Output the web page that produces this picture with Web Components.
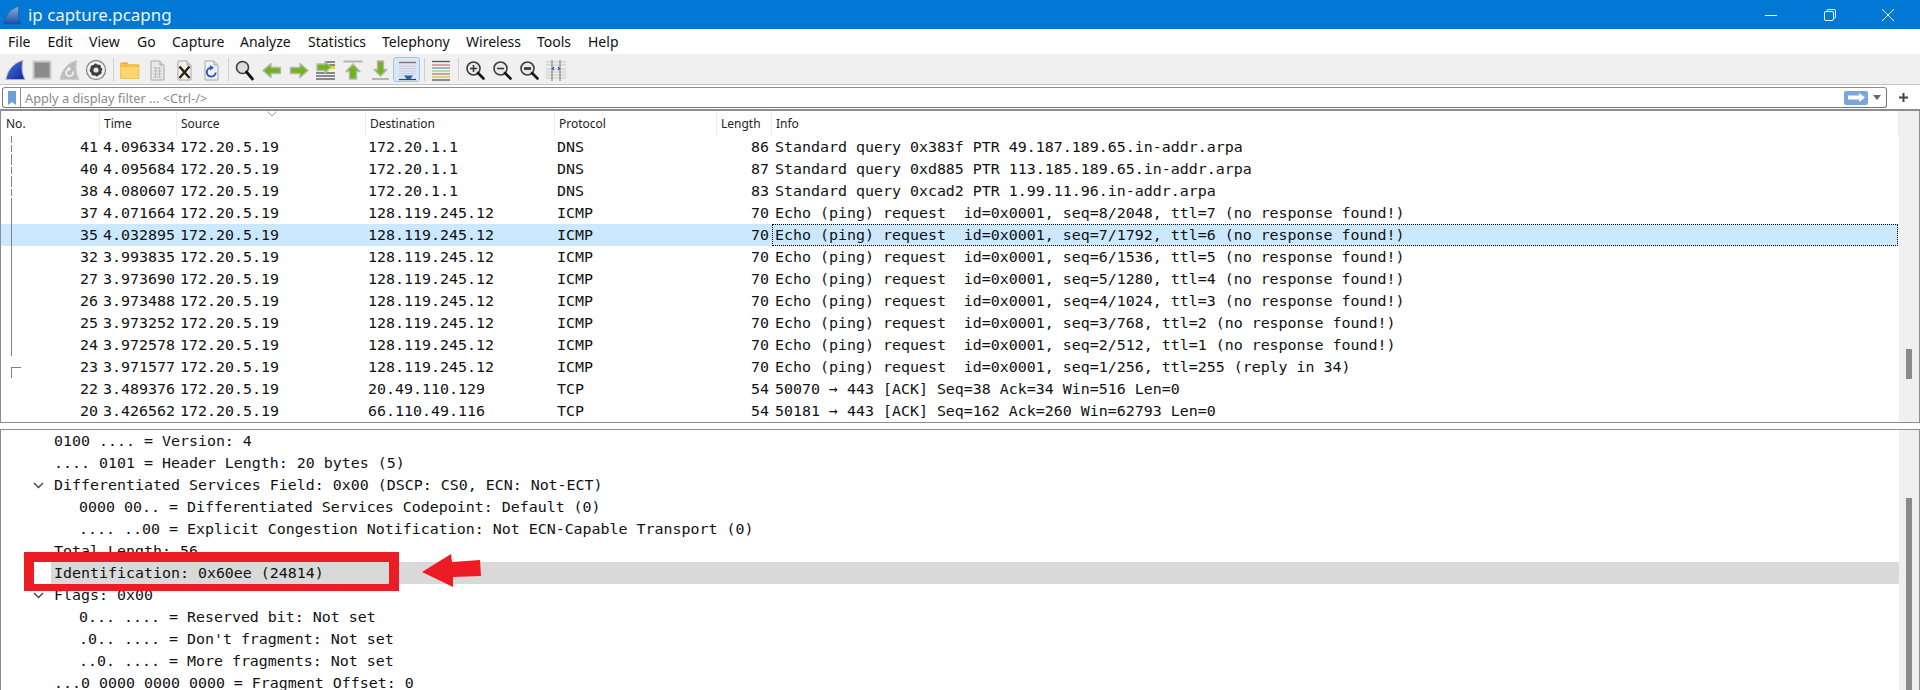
<!DOCTYPE html>
<html lang="en">
<head>
<meta charset="utf-8">
<title>ip capture.pcapng</title>
<style>
html,body{margin:0;padding:0;background:#fff;overflow:hidden;height:690px}
</style>
</head>
<body>
<ws-app>
  <ws-titlebar title-text="ip capture.pcapng"></ws-titlebar>
  <ws-menubar>
    <ws-menu-item w="39.5">File</ws-menu-item>
    <ws-menu-item w="41.5">Edit</ws-menu-item>
    <ws-menu-item w="48">View</ws-menu-item>
    <ws-menu-item w="35">Go</ws-menu-item>
    <ws-menu-item w="68">Capture</ws-menu-item>
    <ws-menu-item w="68">Analyze</ws-menu-item>
    <ws-menu-item w="74">Statistics</ws-menu-item>
    <ws-menu-item w="84">Telephony</ws-menu-item>
    <ws-menu-item w="71">Wireless</ws-menu-item>
    <ws-menu-item w="51">Tools</ws-menu-item>
    <ws-menu-item w="50">Help</ws-menu-item>
  </ws-menubar>
  <ws-toolbar>
    <ws-icon name="fin"></ws-icon><ws-icon name="stop"></ws-icon><ws-icon name="restart"></ws-icon><ws-icon name="gear"></ws-icon>
    <ws-sep></ws-sep>
    <ws-icon name="folder"></ws-icon><ws-icon name="doc"></ws-icon><ws-icon name="docx"></ws-icon><ws-icon name="docr"></ws-icon>
    <ws-sep></ws-sep>
    <ws-icon name="search"></ws-icon><ws-icon name="left"></ws-icon><ws-icon name="right"></ws-icon><ws-icon name="goto"></ws-icon><ws-icon name="first"></ws-icon><ws-icon name="last"></ws-icon><ws-icon name="auto" active></ws-icon>
    <ws-sep></ws-sep>
    <ws-icon name="color"></ws-icon>
    <ws-sep></ws-sep>
    <ws-icon name="zin"></ws-icon><ws-icon name="zout"></ws-icon><ws-icon name="znorm"></ws-icon><ws-icon name="resize"></ws-icon>
  </ws-toolbar>
  <ws-filterbar placeholder="Apply a display filter ... &lt;Ctrl-/&gt;"></ws-filterbar>
  <ws-packetlist>
    <ws-packet-row tree="dash" no="41" time="4.096334" src="172.20.5.19" dst="172.20.1.1" proto="DNS" len="86">Standard query 0x383f PTR 49.187.189.65.in-addr.arpa</ws-packet-row>
    <ws-packet-row tree="dash" no="40" time="4.095684" src="172.20.5.19" dst="172.20.1.1" proto="DNS" len="87">Standard query 0xd885 PTR 113.185.189.65.in-addr.arpa</ws-packet-row>
    <ws-packet-row tree="dash" no="38" time="4.080607" src="172.20.5.19" dst="172.20.1.1" proto="DNS" len="83">Standard query 0xcad2 PTR 1.99.11.96.in-addr.arpa</ws-packet-row>
    <ws-packet-row tree="line" no="37" time="4.071664" src="172.20.5.19" dst="128.119.245.12" proto="ICMP" len="70">Echo (ping) request  id=0x0001, seq=8/2048, ttl=7 (no response found!)</ws-packet-row>
    <ws-packet-row tree="line" selected no="35" time="4.032895" src="172.20.5.19" dst="128.119.245.12" proto="ICMP" len="70">Echo (ping) request  id=0x0001, seq=7/1792, ttl=6 (no response found!)</ws-packet-row>
    <ws-packet-row tree="line" no="32" time="3.993835" src="172.20.5.19" dst="128.119.245.12" proto="ICMP" len="70">Echo (ping) request  id=0x0001, seq=6/1536, ttl=5 (no response found!)</ws-packet-row>
    <ws-packet-row tree="line" no="27" time="3.973690" src="172.20.5.19" dst="128.119.245.12" proto="ICMP" len="70">Echo (ping) request  id=0x0001, seq=5/1280, ttl=4 (no response found!)</ws-packet-row>
    <ws-packet-row tree="line" no="26" time="3.973488" src="172.20.5.19" dst="128.119.245.12" proto="ICMP" len="70">Echo (ping) request  id=0x0001, seq=4/1024, ttl=3 (no response found!)</ws-packet-row>
    <ws-packet-row tree="line" no="25" time="3.973252" src="172.20.5.19" dst="128.119.245.12" proto="ICMP" len="70">Echo (ping) request  id=0x0001, seq=3/768, ttl=2 (no response found!)</ws-packet-row>
    <ws-packet-row tree="line" no="24" time="3.972578" src="172.20.5.19" dst="128.119.245.12" proto="ICMP" len="70">Echo (ping) request  id=0x0001, seq=2/512, ttl=1 (no response found!)</ws-packet-row>
    <ws-packet-row tree="corner" no="23" time="3.971577" src="172.20.5.19" dst="128.119.245.12" proto="ICMP" len="70">Echo (ping) request  id=0x0001, seq=1/256, ttl=255 (reply in 34)</ws-packet-row>
    <ws-packet-row no="22" time="3.489376" src="172.20.5.19" dst="20.49.110.129" proto="TCP" len="54">50070 → 443 [ACK] Seq=38 Ack=34 Win=516 Len=0</ws-packet-row>
    <ws-packet-row no="20" time="3.426562" src="172.20.5.19" dst="66.110.49.116" proto="TCP" len="54">50181 → 443 [ACK] Seq=162 Ack=260 Win=62793 Len=0</ws-packet-row>
  </ws-packetlist>
  <ws-details>
    <ws-detail-row>0100 .... = Version: 4</ws-detail-row>
    <ws-detail-row>.... 0101 = Header Length: 20 bytes (5)</ws-detail-row>
    <ws-detail-row open>Differentiated Services Field: 0x00 (DSCP: CS0, ECN: Not-ECT)</ws-detail-row>
    <ws-detail-row level="1">0000 00.. = Differentiated Services Codepoint: Default (0)</ws-detail-row>
    <ws-detail-row level="1">.... ..00 = Explicit Congestion Notification: Not ECN-Capable Transport (0)</ws-detail-row>
    <ws-detail-row>Total Length: 56</ws-detail-row>
    <ws-detail-row selected>Identification: 0x60ee (24814)</ws-detail-row>
    <ws-detail-row open>Flags: 0x00</ws-detail-row>
    <ws-detail-row level="1">0... .... = Reserved bit: Not set</ws-detail-row>
    <ws-detail-row level="1">.0.. .... = Don't fragment: Not set</ws-detail-row>
    <ws-detail-row level="1">..0. .... = More fragments: Not set</ws-detail-row>
    <ws-detail-row>...0 0000 0000 0000 = Fragment Offset: 0</ws-detail-row>
  </ws-details>
  <ws-annotation></ws-annotation>
</ws-app>
<script>
const UI='"Noto Sans","Open Sans","Liberation Sans",sans-serif';
const MONO='"DejaVu Sans Mono","Liberation Mono",monospace';
function def(name,build){
  customElements.define(name,class extends HTMLElement{
    connectedCallback(){
      if(this.shadowRoot)return;
      const s=this.attachShadow({mode:'open'});
      s.innerHTML=build(this);
    }
  });
}
const a=(el,n,d='')=>{const v=el.getAttribute(n);return v===null?d:v};
const FIN='M2 20.5C3.5 11 10 3.5 19 1.5 17.2 8 18 15 21 20.5Z';

def('ws-app',()=>`<style>:host{display:flex;flex-direction:column;width:1920px;height:690px;overflow:hidden;position:relative;background:#fff}</style><slot></slot>`);

def('ws-titlebar',el=>`<style>
:host{display:flex;align-items:center;height:29px;flex:none;background:#0078d4;color:#fff;font:16px/29px ${UI}}
.logo{margin:0 6px 0 2px;display:block}
.t{flex:1;font-size:16.9px;color:#eef6fd}
.b{width:58.5px;display:flex;justify-content:center;align-items:center}
.b svg{display:block}
.c{width:58px;padding-right:3px}
</style>
<svg class="logo" width="20" height="20" viewBox="0 0 22 22"><defs><linearGradient id="g" x1="0" y1="0" x2="0" y2="1"><stop offset="0" stop-color="#8fb0d8"/><stop offset="1" stop-color="#1c4fa8"/></linearGradient></defs><path d="${FIN}" fill="url(#g)" stroke="#0a5aa8" stroke-width=".6"/></svg>
<span class="t">${a(el,'title-text')}</span>
<span class="b"><svg width="14" height="14" viewBox="0 0 14 14"><path d="M1 7.5H13" stroke="#fff" stroke-width="1"/></svg></span>
<span class="b"><svg width="14" height="14" viewBox="0 0 14 14" fill="none" stroke="#fff"><rect x="1.5" y="3.5" width="9" height="9" rx="1.5"/><path d="M4 3.5V2.7A1.2 1.2 0 0 1 5.2 1.5H11A1.5 1.5 0 0 1 12.5 3V9A1.2 1.2 0 0 1 11.3 10.2H10.5"/></svg></span>
<span class="b c"><svg width="14" height="14" viewBox="0 0 14 14"><path d="M1 1L13 13M13 1L1 13" stroke="#fff" stroke-width="1"/></svg></span>`);

def('ws-menubar',()=>`<style>:host{display:flex;align-items:center;height:25px;flex:none;background:#fff;border-bottom:1px solid #f0f0f0;box-sizing:content-box;font:14px/25px ${UI};color:#111;padding-left:8px}</style><slot></slot>`);
def('ws-menu-item',el=>`<style>:host{display:block;flex:none;width:${a(el,'w')}px}</style><slot></slot>`);

def('ws-toolbar',()=>`<style>:host{display:flex;align-items:center;height:29px;flex:none;background:#f0f0f0;border-bottom:1px solid #c4c4c4;padding-left:1px}</style><slot></slot>`);
def('ws-sep',()=>`<style>:host{display:block;flex:none;width:7px;height:25px}
i{display:block;width:1px;height:23px;margin:1px 0 0 4px;background:#cfcfcf}</style><i></i>`);

const doc=(inner,fill='#f4f1df')=>`<path d="M5 2H14L18 6V21H5Z" fill="${fill}" stroke="#a8a8a8"/><path d="M14 2V6H18" fill="#ddd" stroke="#a8a8a8"/>${inner}`;
const grid='<path d="M7.5 9H15.5M7.5 12H15.5M7.5 15H15.5M7.5 18H15.5M9.5 8V19M13.5 8V19" stroke="#bdbdbd" fill="none"/>';
const arrow=(d)=>`<path d="${d}" fill="#6cb51e" stroke="#b6b6ac" stroke-width="1.4" stroke-linejoin="round"/>`;
const mag=(inner='',glass='#e8e8e8')=>`<circle cx="9.5" cy="9.5" r="6.5" fill="${glass}" stroke="#3c3c3c" stroke-width="1.6"/>${inner}<path d="M14 14L19.5 19.5" stroke="#111" stroke-width="2.6" stroke-linecap="round"/>`;
const ICONS={
 fin:`<defs><linearGradient id="f" x1="0" y1="0" x2="1" y2="1"><stop offset="0" stop-color="#4a78e0"/><stop offset="1" stop-color="#10279a"/></linearGradient></defs><path d="${FIN}" fill="url(#f)" stroke="#b0b0b8" stroke-width="1"/>`,
 stop:`<rect x="2.5" y="2.5" width="17" height="17" fill="#8a8a8a" stroke="#c9c9c9" stroke-width="2"/>`,
 restart:`<path d="${FIN}" fill="#bdbdbd" stroke="#cfcfcf"/><path d="M15 12.5A3.6 3.6 0 1 1 11.2 10" fill="none" stroke="#f2f2f2" stroke-width="1.7"/><path d="M10 7.5L13.4 10 10 12.4Z" fill="#f2f2f2"/>`,
 gear:`<circle cx="11" cy="11" r="9.5" fill="#f5f5f5" stroke="#8c8c8c" stroke-width="1.4"/><circle cx="11" cy="11" r="6.4" fill="#3f3f3f"/><circle cx="11" cy="11" r="6.4" fill="none" stroke="#f5f5f5" stroke-width="1.2" stroke-dasharray="2.4 2.6"/><circle cx="11" cy="11" r="2.6" fill="#e6e6e6"/>`,
 folder:`<path d="M1.5 5.5V3.5H8.5L10 5.5Z" fill="#f0ae1c"/><path d="M1.5 5.5H20V19.5H1.5Z" fill="#fbd66c" stroke="#eec55c"/><path d="M1.5 7H20" stroke="#eaa61b"/>`,
 doc:doc(grid,'#e9e9e9'),
 docx:doc(`<path d="M6.5 7.5L16.5 19M16.5 7.5L6.5 19" stroke="#222" stroke-width="2.4"/>`),
 docr:doc(`<path d="M15.6 13.5A4.4 4.4 0 1 1 11 8.8" fill="none" stroke="#2c5fb4" stroke-width="2"/><path d="M10 6L14 8.8 10 11.5Z" fill="#2c5fb4"/>`,'#ecf2f6'),
 search:`<circle cx="8.5" cy="8.5" r="6" fill="#dcdcdc" stroke="#3c3c3c" stroke-width="1.6"/><path d="M12.5 13L18.5 20" stroke="#111" stroke-width="2.8" stroke-linecap="round"/>`,
 left:arrow('M2 11.5L10 4.5V8.5H19.5V14.5H10V18.5Z'),
 right:arrow('M20 11.5L12 4.5V8.5H2.5V14.5H12V18.5Z'),
 goto:`<path d="M11 3H20M14 6H20M1 17H20M1 20H20M1 14H20" stroke="#222" stroke-width="1.2"/><rect x="14" y="7" width="6" height="3" fill="#f2d21d"/>`+arrow('M16 8L10 2.5V5H2V11.5H10V14Z'),
 first:`<path d="M1.5 2.5H20.5" stroke="#b4b4b4" stroke-width="2"/>`+arrow('M11 5L18 12.5H14.5V20H7.5V12.5H4Z'),
 last:`<path d="M3 20H20" stroke="#b4b4b4" stroke-width="2"/>`+arrow('M11.5 17L5 10.5H8.5V2H14.5V10.5H18Z'),
 auto:`<path d="M3 3.5H20" stroke="#777" stroke-width="1.4"/><path d="M3 7H20M3 9.5H20M3 12H20M3 14.5H20M3 17H14" stroke="#cfcfcf" stroke-width="1"/><path d="M3 20.5H20" stroke="#444" stroke-width="1.2"/><path d="M8 16.5H17L14.5 20H10.5Z" fill="#2a62b8"/>`,
 color:`<g stroke-width="1.3"><path d="M2 2.5H20" stroke="#555"/><path d="M2 6H20" stroke="#d8746c"/><path d="M2 9H20" stroke="#7d8ecb"/><path d="M2 12H20" stroke="#9dd24e"/><path d="M2 15H20" stroke="#8a8a8a"/><path d="M2 18H20" stroke="#e6b522"/><path d="M2 21H20" stroke="#555"/></g>`,
 zin:mag('<path d="M6 9.5H13M9.5 6V13" stroke="#333" stroke-width="1.5"/>'),
 zout:mag('<path d="M6 9.5H13" stroke="#333" stroke-width="1.5"/>'),
 znorm:mag('<path d="M6 9.5H13" stroke="#333" stroke-width="2.6"/>'),
 resize:`<path d="M1 3H21M1 6H21M1 10H21M1 13H21M1 16H21M1 19H21" stroke="#c4c4c4"/><path d="M7 1V22M15 1V22" stroke="#777"/><path d="M9 8L7.5 9.5 9 11M13 8L14.5 9.5 13 11" stroke="#2a62b8" fill="none" stroke-width="1.4"/>`
};
def('ws-icon',el=>`<style>
:host{display:flex;flex:none;width:27px;height:25px;align-items:center;justify-content:center;box-sizing:border-box}
:host([active]){background:#d5e7f8;border:1px solid #9cc6ee;border-radius:3px}
svg{display:block}
</style><svg width="22" height="22" viewBox="0 0 22 22">${ICONS[a(el,'name')]||''}</svg>`);

def('ws-filterbar',el=>`<style>
:host{display:flex;align-items:center;flex:none;height:24px;background:#fff;padding:0 0 0 2px;box-sizing:border-box;font:12.75px ${UI}}
.box{width:1885px;height:21px;box-sizing:border-box;margin-top:1px;border:1px solid #767676;border-top-color:#8c8c8c;border-radius:3px;display:flex;align-items:center}
.mark{width:17px;height:19px;border-right:1px solid #8c8c8c;display:flex;justify-content:center;align-items:center;flex:none}
.ph{flex:1;color:#8a8a8a;padding-left:4px;white-space:pre}
.go{width:24px;height:14px;background:#7ba7d8;border-radius:2px;display:flex;align-items:center;justify-content:center}
.dd{width:18px;display:flex;justify-content:center}
.plus{width:32px;display:flex;justify-content:center}
svg{display:block}
</style>
<div class="box">
 <span class="mark"><svg width="8" height="14" viewBox="0 0 8 14"><path d="M0 0H8V14L4 11 0 14Z" fill="#6d9fd8"/></svg></span>
 <span class="ph">${a(el,'placeholder').replace(/</g,'&lt;')}</span>
 <span class="go"><svg width="17" height="9" viewBox="0 0 17 9"><path d="M0 2.5H11V0L17 4.5 11 9V6.5H0Z" fill="#fff"/></svg></span>
 <span class="dd"><svg width="8" height="5" viewBox="0 0 8 5"><path d="M0 0H8L4 5Z" fill="#666"/></svg></span>
</div>
<span class="plus"><svg width="9" height="9" viewBox="0 0 9 9"><path d="M4.5 0V9M0 4.5H9" stroke="#444" stroke-width="2"/></svg></span>`);

def('ws-scrollbar',el=>`<style>
:host{display:block;flex:none;width:20px;background:#f0f0f0;overflow:hidden}
i{display:block;width:6px;margin:${a(el,'top')}px 0 0 7px;height:${a(el,'size')}px;background:#8a8a8a}
</style><i></i>`);

const COLS='98px 77px 189px 189px 162px 55px 1fr';
def('ws-packetlist',()=>`<style>
:host{display:flex;flex:none;height:314px;box-sizing:border-box;border:1px solid #8c8c96;border-width:2px 1px 1px;background:#fff}
.main{flex:1;min-width:0}
.head{display:grid;grid-template-columns:${COLS};height:25px;margin-right:1px;font:12px/25px ${UI};color:#222;position:relative}
.head span{padding-left:5px;border-right:1px solid #ececec;height:25px;margin-right:-1px;white-space:nowrap}
.head svg{position:absolute;left:266px;top:0}
</style>
<div class="main"><div class="head"><span>No.</span><span>Time</span><span>Source</span><span>Destination</span><span>Protocol</span><span>Length</span><span>Info</span>
<svg width="10" height="6" viewBox="0 0 10 6"><path d="M.5 .5L5 5 9.5 .5" fill="none" stroke="#9a9a9a"/></svg></div><slot></slot></div>
<ws-scrollbar top="238" size="30"></ws-scrollbar>`);

const TREE={
 dash:'background:repeating-linear-gradient(#808080 0 7px,transparent 7px 9px) 10px 0/1px 100% no-repeat;',
 line:'background:linear-gradient(#808080,#808080) 10px 0/1px 100% no-repeat;',
 corner:'background:linear-gradient(#808080,#808080) 10px 11px/1px 11px no-repeat,linear-gradient(#808080,#808080) 10px 11px/10px 1px no-repeat;'
};
def('ws-packet-row',el=>`<style>
:host{display:grid;grid-template-columns:${COLS};height:22px;margin-right:1px;font:14.95px/22px ${MONO};color:#111;white-space:pre}
:host([selected]){background:#cce8ff;border-radius:2px}
.c{padding:0 0 0 3px;overflow:hidden}
.p4{padding-left:4px}
.r{text-align:right;padding:0 2px 0 0}
.no{padding-right:1px;${TREE[a(el,'tree')]||''}}
.info{padding-left:3px;margin-left:1px;overflow:hidden}
:host([selected]) .info{outline:1px dotted #000;outline-offset:-1px}
</style>
<span class="r no">${a(el,'no')}</span><span class="c p4">${a(el,'time')}</span><span class="c p4">${a(el,'src')}</span><span class="c">${a(el,'dst')}</span><span class="c">${a(el,'proto')}</span><span class="r">${a(el,'len')}</span><span class="info"><slot></slot></span>`);

def('ws-details',()=>`<style>
:host{display:flex;flex:1;min-height:0;margin-top:6px;border:1px solid #8c8c96;border-width:1px 1px 0;background:#fff;overflow:hidden}
.main{flex:1;min-width:0}
</style><div class="main"><slot></slot></div><ws-scrollbar top="68" size="200"></ws-scrollbar>`);

def('ws-detail-row',el=>{
 const lvl=+a(el,'level','0');
 return `<style>
:host{display:flex;height:22px;font:14.95px/22px ${MONO};color:#111;white-space:pre}
.ind{flex:none;width:${lvl?75:50}px;position:relative}
.ind svg{position:absolute;left:32px;top:8px}
.t{flex:1;padding-left:3px;${el.hasAttribute('selected')?'background:#d9d9d9;border-radius:0 2px 2px 0;':''}}
</style><span class="ind">${el.hasAttribute('open')?'<svg width="11" height="7" viewBox="0 0 11 7"><path d="M1 1L5.5 5.5 10 1" fill="none" stroke="#444" stroke-width="1.4"/></svg>':''}</span><span class="t"><slot></slot></span>`;
});

def('ws-annotation',()=>`<style>
:host{display:block;position:absolute;left:0;top:0;width:0;height:0}
.box{position:absolute;left:24px;top:552px;width:375px;height:39px;box-sizing:border-box;border:solid #ed1c24;border-width:10px 10px 7px}
svg{position:absolute;left:420px;top:552px}
</style><div class="box"></div>
<svg width="64" height="38" viewBox="0 0 64 38"><path d="M2 20L31 2 32 10 60 8 61 24 33 25 33 35Z" fill="#ed1c24"/></svg>`);
</script>
</body>
</html>
